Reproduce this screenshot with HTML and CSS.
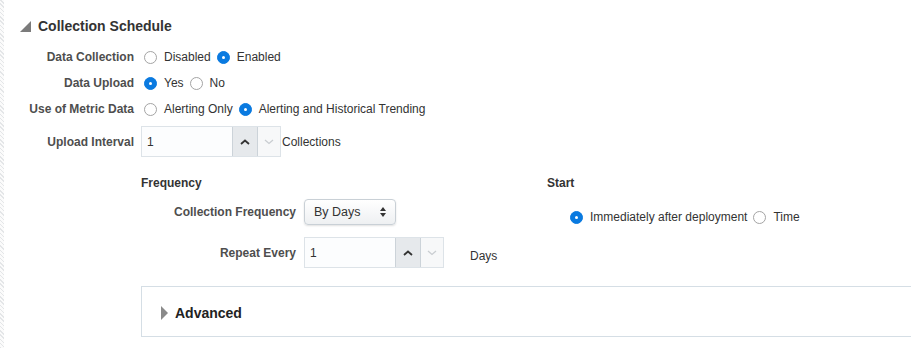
FILE: index.html
```html
<!DOCTYPE html>
<html>
<head>
    <title>Collection Schedule</title>
    <link rel="stylesheet" href="styles.css">
</head>
<body>
    <div class="page">
        <div class="stripe"></div>
        <div class="content">
            <div class="section-head">
                <svg class="tri-open" width="11" height="11" viewBox="0 0 11 11"><polygon points="11,0 11,11 0,11" fill="#7b7b7b"/></svg>
                <h2>Collection Schedule</h2>
            </div>

            <div class="form">
                <div class="row">
                    <label class="label">Data Collection</label>
                    <div class="field">
                        <span class="opt"><span class="radio"></span>Disabled</span>
                        <span class="opt"><span class="radio on"></span>Enabled</span>
                    </div>
                </div>
                <div class="row">
                    <label class="label">Data Upload</label>
                    <div class="field">
                        <span class="opt"><span class="radio on"></span>Yes</span>
                        <span class="opt"><span class="radio"></span>No</span>
                    </div>
                </div>
                <div class="row">
                    <label class="label">Use of Metric Data</label>
                    <div class="field">
                        <span class="opt"><span class="radio"></span>Alerting Only</span>
                        <span class="opt"><span class="radio on"></span>Alerting and Historical Trending</span>
                    </div>
                </div>
                <div class="row row-input">
                    <label class="label">Upload Interval</label>
                    <div class="field">
                        <div class="spinner">
                            <input class="spin-text" type="text" value="1">
                            <span class="spin-btn up">
                                <svg width="10" height="6" viewBox="0 0 10 6"><polyline points="1,5 5,1.5 9,5" fill="none" stroke="#333" stroke-width="1.8"/></svg>
                            </span>
                            <span class="spin-btn down">
                                <svg width="10" height="6" viewBox="0 0 10 6"><polyline points="1,1 5,4.5 9,1" fill="none" stroke="#c9cdd1" stroke-width="1.3"/></svg>
                            </span>
                        </div>
                        <span class="unit">Collections</span>
                    </div>
                </div>
            </div>

            <div class="schedule">
                <div class="freq">
                    <h3>Frequency</h3>
                    <div class="freq-grid">
                        <label class="label">Collection Frequency</label>
                        <div class="select">
                            <span>By Days</span>
                            <svg width="6" height="10" viewBox="0 0 6 10"><polygon points="3,0 6,4 0,4" fill="#333"/><polygon points="0,6 6,6 3,10" fill="#333"/></svg>
                        </div>
                        <label class="label">Repeat Every</label>
                        <div class="field">
                            <div class="spinner">
                                <input class="spin-text" type="text" value="1">
                                <span class="spin-btn up">
                                    <svg width="10" height="6" viewBox="0 0 10 6"><polyline points="1,5 5,1.5 9,5" fill="none" stroke="#333" stroke-width="1.8"/></svg>
                                </span>
                                <span class="spin-btn down">
                                    <svg width="10" height="6" viewBox="0 0 10 6"><polyline points="1,1 5,4.5 9,1" fill="none" stroke="#c9cdd1" stroke-width="1.3"/></svg>
                                </span>
                            </div>
                            <span class="unit days">Days</span>
                        </div>
                    </div>
                </div>
                <div class="start">
                    <h3>Start</h3>
                    <div class="start-opts">
                        <span class="opt"><span class="radio on"></span>Immediately after deployment</span>
                        <span class="opt"><span class="radio"></span>Time</span>
                    </div>
                </div>
            </div>

            <div class="advanced">
                <svg width="8" height="14" viewBox="0 0 8 14"><polygon points="0,0 7,7 0,14" fill="#8a8a8a"/></svg>
                <span>Advanced</span>
            </div>
        </div>
    </div>
</body>
</html>
```

FILE: styles.css
```css
body {
    margin: 0;
    padding: 0;
    background: #ffffff;
    font-family: "Liberation Sans", Arial, sans-serif;
    font-size: 12px;
    color: #333333;
    overflow: hidden;
}

.page {
    display: flex;
    height: 348px;
}

.stripe {
    width: 4px;
    flex-shrink: 0;
    background: repeating-linear-gradient(45deg, #e4e6e8 0 1px, #fbfbfb 1px 3px);
}

.content {
    flex: 1;
    min-width: 0;
    overflow: hidden;
    padding-top: 16px;
}

.section-head {
    display: flex;
    align-items: center;
    padding-left: 16px;
    height: 20px;
}

.tri-open {
    margin-right: 7px;
    margin-top: 1px;
}

.section-head h2 {
    margin: 0;
    font-size: 14px;
    font-weight: bold;
    color: #333333;
}

.form {
    margin-top: 8px;
}

.row {
    display: flex;
    align-items: center;
    height: 26px;
}

.row-input {
    height: 31px;
    margin-top: 4px;
}

.label {
    font-weight: bold;
    color: #4e4e4e;
    text-align: right;
}

.row .label {
    width: 130px;
    margin-right: 7px;
}

.field {
    display: flex;
    align-items: center;
}

.opt {
    display: inline-flex;
    align-items: center;
    gap: 7px;
    margin: 0 3px;
    color: #333333;
}

.radio {
    width: 13px;
    height: 13px;
    box-sizing: border-box;
    border-radius: 50%;
    border: 1px solid #a4a4a4;
    background: #ffffff;
    position: relative;
}

.radio.on {
    border-color: #0a7ae0;
    background: #0a7ae0;
}

.radio.on::after {
    content: "";
    position: absolute;
    left: 4px;
    top: 4px;
    width: 3px;
    height: 3px;
    border-radius: 50%;
    background: #ffffff;
}

.spinner {
    display: flex;
    height: 31px;
    box-sizing: border-box;
    border: 1px solid #dde3e8;
}

.spin-text {
    width: 90px;
    border: none;
    margin: 0;
    padding: 0 0 0 5px;
    box-sizing: border-box;
    font-family: "Liberation Sans", Arial, sans-serif;
    font-size: 12px;
    color: #333333;
    background: #fcfdfe;
    outline: none;
}

.spin-btn {
    display: flex;
    align-items: center;
    justify-content: center;
    width: 24px;
}

.spin-btn.up {
    background: #e6e9ec;
    border-left: 1px solid #ccd3d9;
    border-right: 1px solid #ccd3d9;
}

.spin-btn.down {
    width: 22px;
    background: #f7f8f9;
}

.unit {
    margin-left: 1px;
    color: #333333;
}

.schedule {
    display: flex;
    margin-top: 18px;
    padding-left: 137px;
}

h3 {
    margin: 0;
    font-size: 12px;
    font-weight: bold;
    color: #333333;
    line-height: 16px;
}

.freq {
    width: 406px;
}

.freq-grid {
    display: grid;
    grid-template-columns: 155px auto;
    column-gap: 8px;
    row-gap: 12px;
    align-items: center;
    margin-top: 8px;
}

.select {
    width: 92px;
    height: 26px;
    box-sizing: border-box;
    display: flex;
    align-items: center;
    justify-content: space-between;
    padding: 0 9px 0 9px;
    border: 1px solid #c9d0d6;
    border-radius: 4px;
    background: linear-gradient(#ffffff, #eef0f2);
    box-shadow: 0 1px 2px rgba(0, 0, 0, 0.12);
    font-size: 12.5px;
    color: #333333;
}

.days {
    margin-left: 26px;
    padding-top: 6px;
}

.start-opts {
    display: flex;
    margin-top: 19px;
    padding-left: 20px;
}

.advanced {
    display: flex;
    align-items: center;
    gap: 6px;
    margin-top: 18px;
    margin-left: 137px;
    width: 900px;
    height: 51px;
    box-sizing: border-box;
    padding: 3px 0 0 19px;
    border: 1px solid #d5dee5;
    font-size: 14px;
    font-weight: bold;
    color: #222222;
}
```
